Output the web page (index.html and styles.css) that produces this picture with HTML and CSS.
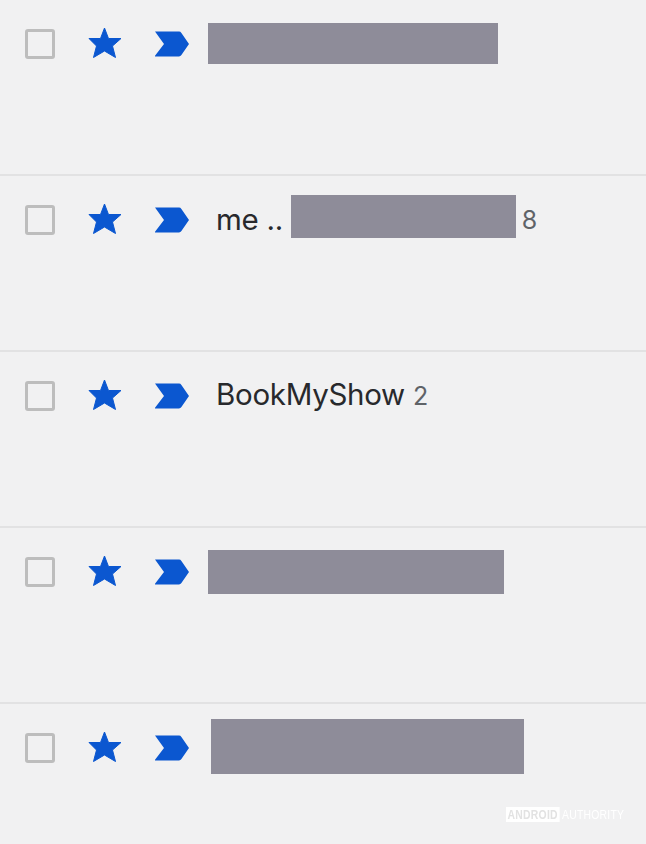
FILE: index.html
```html
<!doctype html>
<html lang="en-us">
<head>
<title>Inbox</title>
<meta http-equiv="Content-Type" content="text/html; charset=utf-8">
<link rel="stylesheet" href="styles.css">
</head>
<body>

<svg class="defs" width="0" height="0">
  <symbol id="star" viewBox="0 0 34 34"><path stroke-linejoin="round" stroke-width="1" d="M16.500 1l4 10.500H33l-8.500 7.500 3 11.500-11-6.500-11 6.500 3-11.500L1 11.500h11.500z"/></symbol>
  <symbol id="label" viewBox="0 0 34 26"><path d="M0 .5h24q1.500 0 2.400 1.400L34 13l-7.600 11.100q-.9 1.400-2.400 1.400H-.5L9 13z"/></symbol>
</svg>

<div id="list">

  <div class="row">
    <div class="head">
      <span class="check"></span>
      <svg class="star"><use href="#star"/></svg>
      <svg class="label"><use href="#label"/></svg>
      <span class="bar bar-a"></span>
    </div>
  </div>

  <div class="row">
    <div class="head">
      <span class="check"></span>
      <svg class="star"><use href="#star"/></svg>
      <svg class="label"><use href="#label"/></svg>
      <span class="from">me ..</span>
      <span class="bar bar-b"></span>
      <span class="count count-b">8</span>
    </div>
  </div>

  <div class="row">
    <div class="head">
      <span class="check"></span>
      <svg class="star"><use href="#star"/></svg>
      <svg class="label"><use href="#label"/></svg>
      <span class="from from-c">BookMyShow</span>
      <span class="count">2</span>
    </div>
  </div>

  <div class="row">
    <div class="head">
      <span class="check"></span>
      <svg class="star"><use href="#star"/></svg>
      <svg class="label"><use href="#label"/></svg>
      <span class="bar bar-c"></span>
    </div>
  </div>

  <div class="row">
    <div class="head">
      <span class="check"></span>
      <svg class="star"><use href="#star"/></svg>
      <svg class="label"><use href="#label"/></svg>
      <span class="bar bar-d"></span>
    </div>
  </div>

</div>

<div id="mark"><b>ANDROID</b> AUTHORITY</div>

</body>
</html>
```

FILE: styles.css
```css
html, body {
  margin: 0;
  padding: 0;
  height: 844px;
  overflow: hidden;
  background: #f1f1f2;
}
.defs {
  position: absolute;
}
.row {
  box-sizing: border-box;
  height: 176px;
  border-bottom: solid 2px #e2e2e3;
}
.head {
  display: flex;
  align-items: center;
  height: 88px;
  padding-left: 25px;
}
.check {
  box-sizing: border-box;
  flex: none;
  width: 30px;
  height: 30px;
  border: solid 3px #bdbdbd;
  border-radius: 3px;
}
.star {
  flex: none;
  width: 34px;
  height: 34px;
  margin-left: 33px;
  fill: #0b57d0;
  stroke: #0b57d0;
}
.label {
  flex: none;
  width: 34px;
  height: 26px;
  margin-left: 33px;
  fill: #0b57d0;
  overflow: visible;
}
.from {
  margin: -3px 0 0 27px;
  color: #28292c;
  font: 29.500px Inter, Arial, sans-serif;
  letter-spacing: -0.3px;
}
.from-c {
  margin-top: -5px;
}
.count {
  margin: -1px 0 0 8px;
  color: #5f6368;
  font: 25px Inter, Arial, sans-serif;
}
.count-b {
  margin: 0 0 0 6px;
}
.bar {
  align-self: flex-start;
  flex: none;
  background: #8e8c99;
}
.bar-a {
  width: 290px;
  height: 41px;
  margin: 23px 0 0 19px;
}
.bar-b {
  width: 225px;
  height: 43px;
  margin: 19px 0 0 8px;
}
.bar-c {
  width: 296px;
  height: 44px;
  margin: 22px 0 0 19px;
}
.bar-d {
  width: 313px;
  height: 55px;
  margin: 15px 0 0 22px;
}
#mark {
  position: absolute;
  left: 506px;
  top: 807px;
  color: #fff;
  font: 13px/16px "Liberation Sans", Arial, sans-serif;
  letter-spacing: 0.3px;
  white-space: nowrap;
  filter: blur(0.6px);
  transform: scaleX(0.8);
  transform-origin: left center;
}
#mark b {
  padding: 0 2px;
  background: #fff;
  color: #e2e2e2;
  font-weight: bold;
}
```
